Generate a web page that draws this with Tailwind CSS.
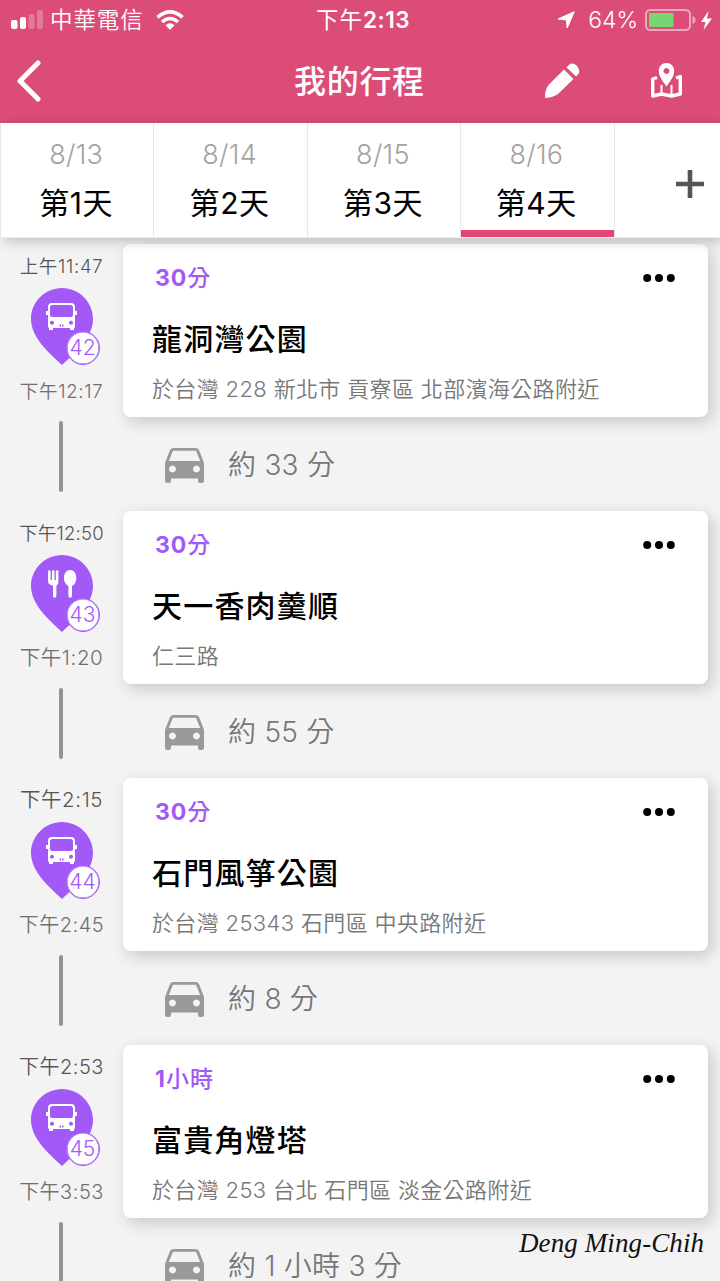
<!DOCTYPE html>
<html lang="zh-Hant">
<head>
<meta charset="utf-8">
<title>我的行程</title>
<script src="https://cdn.jsdelivr.net/npm/@tailwindcss/browser@4"></script>
</head>
<body class="h-[1281px] w-[720px] overflow-hidden bg-[#f3f3f3] font-['Inter','Noto_Sans_CJK_TC',sans-serif] whitespace-nowrap">
<svg class="hidden">
  <symbol id="bus" viewBox="0 0 31 28"><path fill="#fff" fill-rule="evenodd" d="M6 0H25Q29 0 29 4V8H31V12H29V23Q29 25 28 25V27H24V25H7V27H3V25Q2 25 2 23V12H0V8H2V4Q2 0 6 0ZM6.500 2Q4 2 4 4.500V12Q4 14 6 14H25Q27 14 27 12V4.500Q27 2 24.500 2ZM6 17.700a2 2 0 1 0 .01 0ZM25 17.700a2 2 0 1 0 .01 0ZM13.500 21.500V23.500H15V21.500ZM16 21.500V23.500H17.500V21.500Z"/></symbol>
  <symbol id="food" viewBox="0 0 31 28"><path fill="#fff" d="M2 1.500a1.300 1.300 0 0 1 2.600 0V10h1.300V1.500a1.300 1.300 0 0 1 2.600 0V10h1.300V1.500a1.300 1.300 0 0 1 2.600 0V10.500Q12.400 15 10.400 15.700V26a1.700 1.700 0 0 1-3.400 0V15.700Q2 15 2 10.500ZM24 0C28.500 0 30.300 4 30.300 8C30.300 12 28.500 15 26 15.800V26a1.800 1.800 0 0 1-3.600 0V15.800C20 15 18 12 18 8C18 4 19.800 0 24 0Z"/></symbol>
  <symbol id="car" viewBox="0 0 39 35"><path fill="#999" fill-rule="evenodd" d="M8.500 0H30.500Q33 0 34 2L39 15V32.500Q39 35 36.500 35H35Q33 35 33 32.500V30.500H6V32.500Q6 35 4 35H2.500Q0 35 0 32.500V15L5 2Q6 0 8.500 0ZM8 2.800L3.800 13H35.200L31 2.800ZM7.500 17.400a3.500 3.500 0 1 0 .01 0ZM31.500 17.400a3.500 3.500 0 1 0 .01 0Z"/></symbol>
</svg>

<header class="h-[123px] bg-[#db4d77] text-white">
  <div class="grid h-10 grid-cols-[305px_96px_1fr] items-center pr-2 pl-[11px]">
    <div class="flex items-center">
      <svg class="h-5 w-8" viewBox="0 0 32 20"><g fill="#fff"><rect y="10" width="6.500" height="9" rx="2"/><rect x="9" y="7" width="6" height="12" rx="2"/><g opacity=".25"><rect x="17.500" y="4" width="6" height="15" rx="2"/><rect x="26" y="0" width="6" height="19" rx="2"/></g></g></svg>
      <span class="ml-[7px] text-[22.5px] leading-10 tracking-[.9px] font-[350]">中華電信</span>
      <svg class="ml-[12px] h-5 w-7" viewBox="0 0 28 20"><g fill="none" stroke="#fff" stroke-width="3.600"><path d="M1.500 7.300Q14-3.500 26.500 7.300"/><path d="M6 12Q14 5 22 12"/></g><path fill="#fff" d="M14 20L9.500 15.200Q14 11.500 18.500 15.200Z"/></svg>
    </div>
    <div class="text-[22.5px] leading-10"><span class="tracking-[1px]">下午</span><span class="font-semibold tracking-[.5px]">2:13</span></div>
    <div class="flex items-center justify-end">
      <svg class="mr-[13px] h-[18px] w-[18px]" viewBox="0 0 18 18"><path fill="#fff" stroke="#fff" stroke-linejoin="round" d="M17.300.700L10.200 17L9.500 9L1 8Z"/></svg>
      <span class="mr-[7px] text-[23px] leading-10 font-[350]">64%</span>
      <svg class="h-[22px] w-[52px]" viewBox="0 0 52 22"><rect x="1" y="1" width="44" height="20" rx="4.500" fill="none" stroke="#fff" stroke-opacity=".5" stroke-width="2"/><path fill="#77d572" d="M4 4H28.500V18H4Z"/><path fill="#fff" fill-opacity=".5" d="M47.500 7Q50.500 8 50.500 11T47.500 15Z"/></svg>
      <svg class="ml-[4px] h-[19px] w-[11px]" viewBox="0 0 11 19"><path fill="#fff" d="M7.500 0L0 11H4.500L2.500 19L11 7.500H6Z"/></svg>
    </div>
  </div>
  <div class="grid h-[83px] grid-cols-[278px_140px_1fr] items-center pr-[38px] pb-[2px] pl-4">
    <svg class="h-[42px] w-[26px]" viewBox="0 0 26 42"><path d="M22 3L4 21L22 39" fill="none" stroke="#fff" stroke-width="5" stroke-linecap="round" stroke-linejoin="round"/></svg>
    <h1 class="pt-[2px] text-[32px] leading-[60px] font-medium tracking-[.7px]">我的行程</h1>
    <div class="flex items-center justify-end gap-[71px]">
      <svg class="h-[35px] w-[35px]" viewBox="0 0 35 35"><g fill="#fff"><path d="M0 34Q0 27 3.500 22L19 6.500L28.500 16L13 31Q8 34.500 1 35Q0 35 0 34Z"/><path d="M21.500 4.500L24.500 1.500Q28-1 31.500 2.500T34 10L31 13.500Z"/></g></svg>
      <svg class="h-[35px] w-[31px]" viewBox="0 0 31 35"><path fill="#fff" fill-rule="evenodd" d="M15.500 0C20 0 23.200 3.500 23.200 8C23.200 14 18 19.500 15.500 23.500C13 19.500 7.800 14 7.800 8C7.800 3.500 11 0 15.500 0ZM15.500 5a3 3 0 1 0 .01 0Z"/><path fill="none" stroke="#fff" stroke-width="3.400" stroke-linejoin="round" d="M6 14.500L1.700 16V33L10.500 31L20.500 33L29.300 31V13.500L25 15"/><path stroke="#fff" stroke-width="2" d="M10.500 22V31M20.500 22V31"/></svg>
    </div>
  </div>
</header>

<nav class="relative flex h-[115px] border-b border-[#ececec] bg-white shadow-[4px_3px_12px_rgba(0,0,0,.22)]">
  <div id="tabs" class="flex border-r border-[#e9e9e9]"></div>
  <div class="flex flex-1 items-center justify-end pr-4 pt-2"><svg class="h-7 w-7" viewBox="0 0 28 28"><path d="M14 0V28M0 14H28" stroke="#555" stroke-width="4.600"/></svg></div>
</nav>

<main id="list" class="h-[1043px] overflow-hidden pt-[6px]"></main>

<div class="absolute top-[1225px] left-[519px] w-[186px] font-['Z003','URW_Chancery_L','Liberation_Serif',cursive] text-[27px] leading-[36px] tracking-[.1px] text-[#111] italic">Deng Ming-Chih</div>

<script>
const days = [['8/13','第1天'],['8/14','第2天'],['8/15','第3天'],['8/16','第4天']];
document.getElementById('tabs').innerHTML = days.map(([date, name], i) => `
  <div class="flex h-[114px] w-[153.4px] flex-col items-center border-l border-[#e9e9e9]">
    <div class="mt-[13px] -ml-[2px] h-[38px] text-[27px] leading-[38px] font-[350] tracking-[.3px] text-[#a3a3a3]">${date}</div>
    <div class="mt-[5px] -ml-[2px] h-[51px] text-[30px] leading-[48px] tracking-[.6px] text-black">${name}</div>
    ${i === 3 ? '<div class="h-[7px] w-full bg-[#e34672]"></div>' : ''}
  </div>`).join('');

const stops = [
  ['上午11:47','下午12:17','bus',42,'30分','龍洞灣公園','於台灣 228 新北市 貢寮區 北部濱海公路附近','約 33 分'],
  ['下午12:50','下午1:20','food',43,'30分','天一香肉羹順','仁三路','約 55 分'],
  ['下午2:15','下午2:45','bus',44,'30分','石門風箏公園','於台灣 25343 石門區 中央路附近','約 8 分'],
  ['下午2:53','下午3:53','bus',45,'1小時','富貴角燈塔','於台灣 253 台北 石門區 淡金公路附近','約 1 小時 3 分']
];
const tone = {
  '上午11:47': 'text-[18.5px] tracking-[.7px]', '下午12:17': 'text-[18.5px] tracking-[.7px]', '下午12:50': 'text-[18.5px] tracking-[.2px]',
  '下午1:20': 'text-[20.5px] tracking-[.6px]', '下午2:15': 'text-[20.5px] tracking-[.6px]'
};
const size = t => tone[t] || 'text-[20px] tracking-[.5px]';
document.getElementById('list').innerHTML = stops.map(([from, to, icon, no, stay, title, addr, drive]) => `
  <section class="flex h-[267px]">
    <div class="flex w-[123px] flex-col items-center pt-2">
      <div class="h-7 leading-7 font-[350] text-[#555] ${size(from)}">${from}</div>
      <div class="relative mt-2 h-[77px] w-[62px]">
        <svg class="h-[77px] w-[62px]" viewBox="0 0 62 77"><path fill="#a259f7" d="M31 0C48 0 62 14 62 31C62 49 45 64 31 77C17 64 0 49 0 31C0 14 14 0 31 0Z"/></svg>
        <svg class="absolute top-[15px] left-[15px] h-7 w-[31px]"><use href="#${icon}"/></svg>
        <div class="absolute top-[43px] left-[35px] flex h-[34px] w-[34px] items-center justify-center rounded-full border border-[#a259f7] bg-white text-[21px] font-[350] text-[#a259f7] shadow-[inset_0_0_0_0.6px_#a259f7]">${no}</div>
      </div>
      <div class="mt-[12px] h-7 leading-7 font-[350] text-[#707070] ${size(to)}">${to}</div>
      <div class="mt-4 mr-[2px] h-[71px] w-1 rounded-full bg-[#949494]"></div>
    </div>
    <div class="w-[585px]">
      <article class="h-[173px] rounded-lg bg-white pl-[29px] shadow-[4px_5px_16px_rgba(0,0,0,.18)]">
        <div class="flex items-center justify-between pt-[14px] pr-[33px] pl-[3px]">
          <div class="h-10 text-[23px] leading-10 font-medium tracking-[1px] text-[#a259f7]"><span class="font-bold">${stay.match(/^\d+/)[0]}</span>${stay.replace(/^\d+/, '')}</div>
          <svg class="h-2 w-[32px]" viewBox="0 0 32 8"><g fill="#000"><circle cx="4.200" cy="4" r="4"/><circle cx="16" cy="4" r="4"/><circle cx="27.800" cy="4" r="4"/></g></svg>
        </div>
        <h2 class="mt-[17px] h-12 text-[30px] leading-[48px] font-medium tracking-[1.2px] text-black">${title}</h2>
        <p class="mt-[8px] h-9 text-[22px] leading-9 font-[350] tracking-[.35px] text-[#777]">${addr}</p>
      </article>
      <div class="flex h-[94px] items-center gap-[24px] pt-[2px] pl-[42px]">
        <svg class="h-[35px] w-[39px]"><use href="#car"/></svg>
        <span class="text-[28px] leading-10 font-[350] tracking-[.25px] text-[#777]">${drive}</span>
      </div>
    </div>
  </section>`).join('');
</script>
</body>
</html>
